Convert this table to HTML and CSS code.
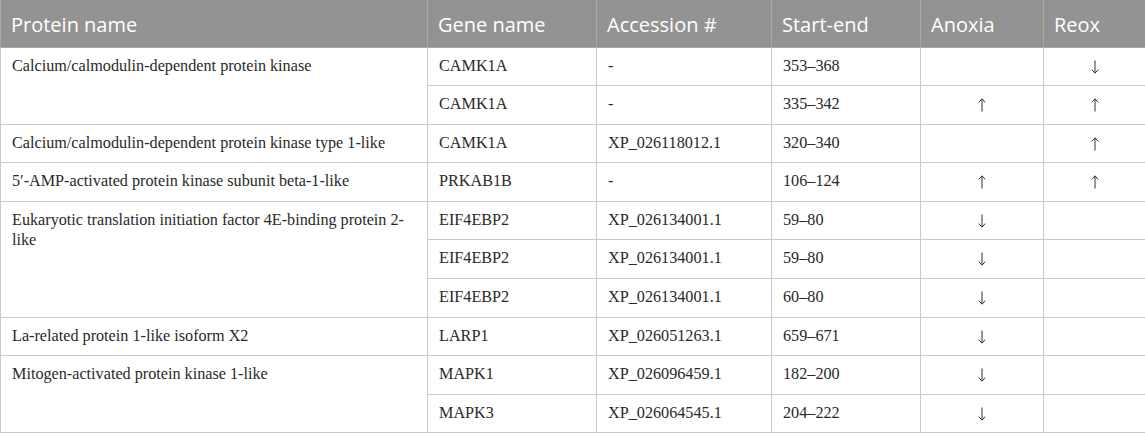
FILE: index.html
```html
<!DOCTYPE html>
<html>
<head>
<meta charset="utf-8">
<link rel="stylesheet" href="styles.css">
</head>
<body>
<table class="data">
  <colgroup>
    <col class="c1"><col class="c2"><col class="c3"><col class="c4"><col class="c5"><col class="c6">
  </colgroup>
  <thead>
    <tr><th>Protein name</th><th>Gene name</th><th>Accession #</th><th>Start-end</th><th>Anoxia</th><th>Reox</th></tr>
  </thead>
  <tbody>
    <tr><td rowspan="2">Calcium/calmodulin-dependent protein kinase</td><td>CAMK1A</td><td>-</td><td>353–368</td><td class="ar"></td><td class="ar"><svg class="arrow down" viewBox="0 0 8 14"><path d="M4 0.5V13M0.8 9.6L4 13.2L7.2 9.6"/></svg></td></tr>
    <tr><td>CAMK1A</td><td>-</td><td>335–342</td><td class="ar"><svg class="arrow" viewBox="0 0 8 14"><path d="M4 13.5V1M0.8 4.4L4 0.8L7.2 4.4"/></svg></td><td class="ar"><svg class="arrow" viewBox="0 0 8 14"><path d="M4 13.5V1M0.8 4.4L4 0.8L7.2 4.4"/></svg></td></tr>
    <tr><td>Calcium/calmodulin-dependent protein kinase type 1-like</td><td>CAMK1A</td><td>XP_026118012.1</td><td>320–340</td><td class="ar"></td><td class="ar"><svg class="arrow" viewBox="0 0 8 14"><path d="M4 13.5V1M0.8 4.4L4 0.8L7.2 4.4"/></svg></td></tr>
    <tr><td>5′-AMP-activated protein kinase subunit beta-1-like</td><td>PRKAB1B</td><td>-</td><td>106–124</td><td class="ar"><svg class="arrow" viewBox="0 0 8 14"><path d="M4 13.5V1M0.8 4.4L4 0.8L7.2 4.4"/></svg></td><td class="ar"><svg class="arrow" viewBox="0 0 8 14"><path d="M4 13.5V1M0.8 4.4L4 0.8L7.2 4.4"/></svg></td></tr>
    <tr><td rowspan="3">Eukaryotic translation initiation factor 4E-binding protein 2-like</td><td>EIF4EBP2</td><td>XP_026134001.1</td><td>59–80</td><td class="ar"><svg class="arrow" viewBox="0 0 8 14"><path d="M4 0.5V13M0.8 9.6L4 13.2L7.2 9.6"/></svg></td><td class="ar"></td></tr>
    <tr><td>EIF4EBP2</td><td>XP_026134001.1</td><td>59–80</td><td class="ar"><svg class="arrow" viewBox="0 0 8 14"><path d="M4 0.5V13M0.8 9.6L4 13.2L7.2 9.6"/></svg></td><td class="ar"></td></tr>
    <tr><td>EIF4EBP2</td><td>XP_026134001.1</td><td>60–80</td><td class="ar"><svg class="arrow" viewBox="0 0 8 14"><path d="M4 0.5V13M0.8 9.6L4 13.2L7.2 9.6"/></svg></td><td class="ar"></td></tr>
    <tr><td>La-related protein 1-like isoform X2</td><td>LARP1</td><td>XP_026051263.1</td><td>659–671</td><td class="ar"><svg class="arrow" viewBox="0 0 8 14"><path d="M4 0.5V13M0.8 9.6L4 13.2L7.2 9.6"/></svg></td><td class="ar"></td></tr>
    <tr><td rowspan="2">Mitogen-activated protein kinase 1-like</td><td>MAPK1</td><td>XP_026096459.1</td><td>182–200</td><td class="ar"><svg class="arrow" viewBox="0 0 8 14"><path d="M4 0.5V13M0.8 9.6L4 13.2L7.2 9.6"/></svg></td><td class="ar"></td></tr>
    <tr><td>MAPK3</td><td>XP_026064545.1</td><td>204–222</td><td class="ar"><svg class="arrow" viewBox="0 0 8 14"><path d="M4 0.5V13M0.8 9.6L4 13.2L7.2 9.6"/></svg></td><td class="ar"></td></tr>
  </tbody>
</table>
</body>
</html>
```
FILE: styles.css
```css
html, body {
  margin: 0;
  padding: 0;
  background: #ffffff;
}
.data {
  width: 1145px;
  border-collapse: collapse;
  table-layout: fixed;
  font-family: "Liberation Serif", "Times New Roman", serif;
  font-size: 16.2px;
  color: #2a2a2a;
}
.c1 { width: 427px; }
.c2 { width: 169px; }
.c3 { width: 175px; }
.c4 { width: 149px; }
.c5 { width: 123px; }
.c6 { width: 102px; }
.data th {
  background: #939393;
  color: #ffffff;
  font-family: "Open Sans", "Noto Sans", sans-serif;
  font-weight: 400;
  font-size: 20px;
  text-align: left;
  height: 47px;
  padding: 3px 10px 0;
  border: 1px solid #a9a9a9;
  border-top: none;
  box-sizing: border-box;
}
.data td {
  border: 1px solid #c9c9c9;
  padding: 8px 11px 9.6px;
  line-height: 20px;
  vertical-align: top;
  text-align: left;
}
.data td.ar {
  text-align: center;
}
.arrow {
  display: inline-block;
  width: 8px;
  height: 14px;
  vertical-align: -3px;
  fill: none;
  stroke: #333333;
  stroke-width: 1;
}
```
